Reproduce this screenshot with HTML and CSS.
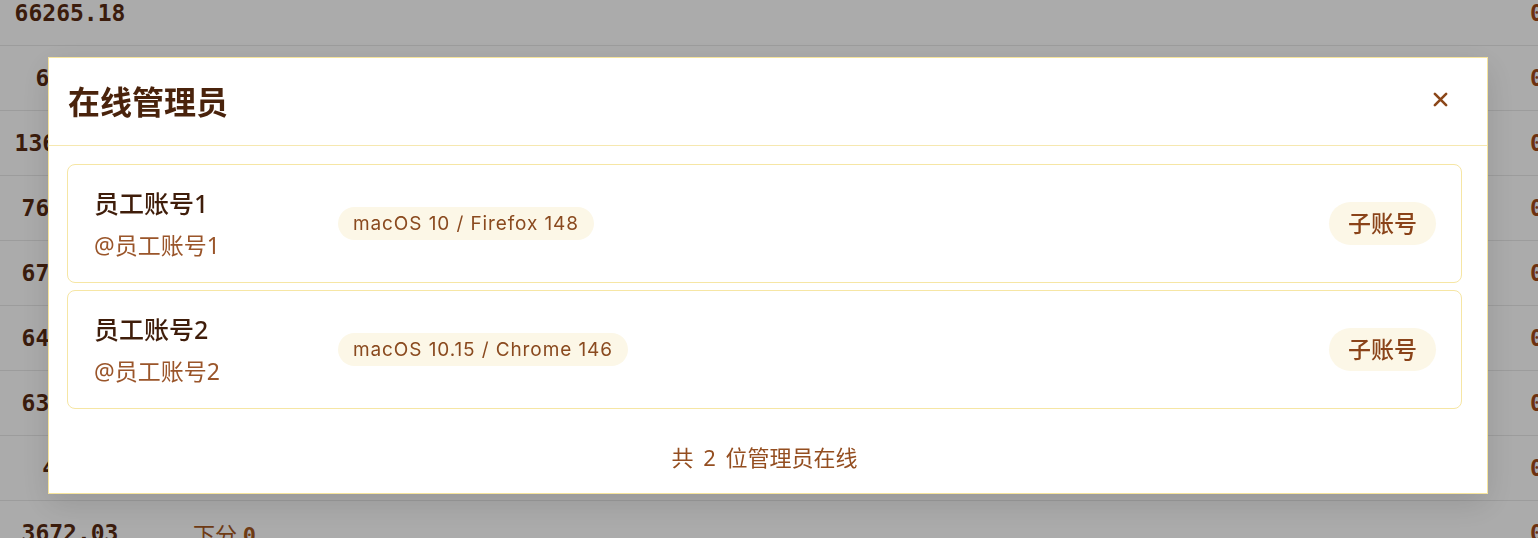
FILE: index.html
```html
<!DOCTYPE html>
<html lang="zh-CN">
<head>
    <meta charset="UTF-8">
    <meta name="viewport" content="width=device-width, initial-scale=1.0">
    <title>在线管理员</title>
    <link rel="stylesheet" href="styles.css">
</head>
<body>
    <main class="ledger">
        <div class="ledger-row"><span class="amount">66265.18</span><span class="note"></span><span class="tail">0.00</span></div>
        <div class="ledger-row"><span class="amount">618.5</span><span class="note"></span><span class="tail">0.00</span></div>
        <div class="ledger-row"><span class="amount">13642.75</span><span class="note"></span><span class="tail">0.00</span></div>
        <div class="ledger-row"><span class="amount">7640.50</span><span class="note"></span><span class="tail">0.00</span></div>
        <div class="ledger-row"><span class="amount">6783.20</span><span class="note"></span><span class="tail">0.00</span></div>
        <div class="ledger-row"><span class="amount">6412.00</span><span class="note"></span><span class="tail">0.00</span></div>
        <div class="ledger-row"><span class="amount">6350.80</span><span class="note"></span><span class="tail">0.00</span></div>
        <div class="ledger-row"><span class="amount">4.00</span><span class="note"></span><span class="tail">0.00</span></div>
        <div class="ledger-row"><span class="amount">3672.03</span><span class="note">下分 <b>0</b></span><span class="tail">0.00</span></div>
    </main>

    <div class="overlay">
        <section class="modal">
            <header class="modal-header">
                <h2>在线管理员</h2>
                <button class="close-btn" aria-label="关闭">
                    <svg width="15" height="15" viewBox="0 0 16 16"><path d="M2 2 L14 14 M14 2 L2 14" stroke="currentColor" stroke-width="2.8" stroke-linecap="round"/></svg>
                </button>
            </header>
            <div class="modal-body">
                <div class="admin-card">
                    <div class="admin-name">
                        <div class="display">员工账号1</div>
                        <div class="handle">@员工账号1</div>
                    </div>
                    <span class="client-tag">macOS 10 / Firefox 148</span>
                    <span class="role-pill">子账号</span>
                </div>
                <div class="admin-card">
                    <div class="admin-name">
                        <div class="display">员工账号2</div>
                        <div class="handle">@员工账号2</div>
                    </div>
                    <span class="client-tag">macOS 10.15 / Chrome 146</span>
                    <span class="role-pill">子账号</span>
                </div>
                <p class="summary">共 <span class="count">2</span> 位管理员在线</p>
            </div>
        </section>
    </div>
</body>
</html>
```

FILE: styles.css
```css
html, body {
    margin: 0;
    height: 100%;
    overflow: hidden;
}
body {
    background: #ffffff;
    font-family: "Noto Sans", "Noto Sans CJK SC", sans-serif;
}

/* table underneath the dialog */
.ledger {
    margin-top: -19px;
}
.ledger-row {
    display: flex;
    align-items: center;
    height: 64px;
    border-bottom: 1px solid #e9e9e9;
}
.ledger-row .amount {
    width: 140px;
    text-align: center;
    font-family: "DejaVu Sans Mono", monospace;
    font-weight: bold;
    font-size: 23px;
    color: #582b12;
}
.ledger-row .note {
    flex: 1;
    padding-left: 53px;
    font-size: 22px;
    color: #a5581f;
}
.ledger-row .note b {
    font-family: "DejaVu Sans Mono", monospace;
}
.ledger-row .tail {
    width: 70px;
    margin-right: -62px;
    font-family: "DejaVu Sans Mono", monospace;
    font-weight: bold;
    font-size: 23px;
    color: #a34a18;
}

/* dialog */
.overlay {
    position: fixed;
    inset: 0;
    background: rgba(0, 0, 0, 0.33);
    display: flex;
    justify-content: center;
    align-items: flex-start;
    padding: 57px 2px 0 0;
}
.modal {
    width: 1438px;
    background: #fff;
    border: 1px solid #f6e49c;
    box-shadow: 0 10px 30px rgba(0, 0, 0, 0.12);
}
.modal-header {
    display: flex;
    align-items: center;
    justify-content: space-between;
    height: 87px;
    padding: 0 39px 0 19px;
    border-bottom: 1px solid #f6e8b0;
}
.modal-header h2 {
    margin: -3px 0 0;
    font-size: 32px;
    font-weight: 600;
    color: #4a230c;
}
.close-btn {
    border: none;
    background: none;
    padding: 0;
    margin-top: -4px;
    color: #8c4719;
    cursor: pointer;
    display: flex;
}
.modal-body {
    padding: 18px 25px 0 18px;
    display: flex;
    flex-direction: column;
    gap: 7px;
}
.admin-card {
    display: flex;
    align-items: center;
    height: 117px;
    padding: 0 25px 0 26px;
    border: 1px solid #f6e6a4;
    border-radius: 8px;
}
.admin-name {
    width: 244px;
    display: flex;
    flex-direction: column;
    gap: 11px;
}
.admin-name .display {
    font-size: 25px;
    line-height: 32px;
    font-weight: 500;
    color: #3f1d0a;
}
.admin-name .handle {
    font-size: 23px;
    line-height: 30px;
    color: #9a552a;
}
.client-tag {
    padding: 5px 15px;
    border-radius: 17px;
    background: #fcf7e7;
    font-family: Inter, "Noto Sans", sans-serif;
    font-size: 19px;
    line-height: 23px;
    letter-spacing: 0.9px;
    color: #8a4a1f;
}
.role-pill {
    margin-left: auto;
    padding: 6px 19px;
    border-radius: 22px;
    background: #fcf7e7;
    font-size: 23px;
    line-height: 31px;
    font-weight: 500;
    color: #8a4319;
}
.summary {
    margin: 25px 0 20px;
    text-align: center;
    font-size: 22px;
    line-height: 32px;
    color: #944e20;
}
.summary .count {
    margin: 0 4px;
}
```
